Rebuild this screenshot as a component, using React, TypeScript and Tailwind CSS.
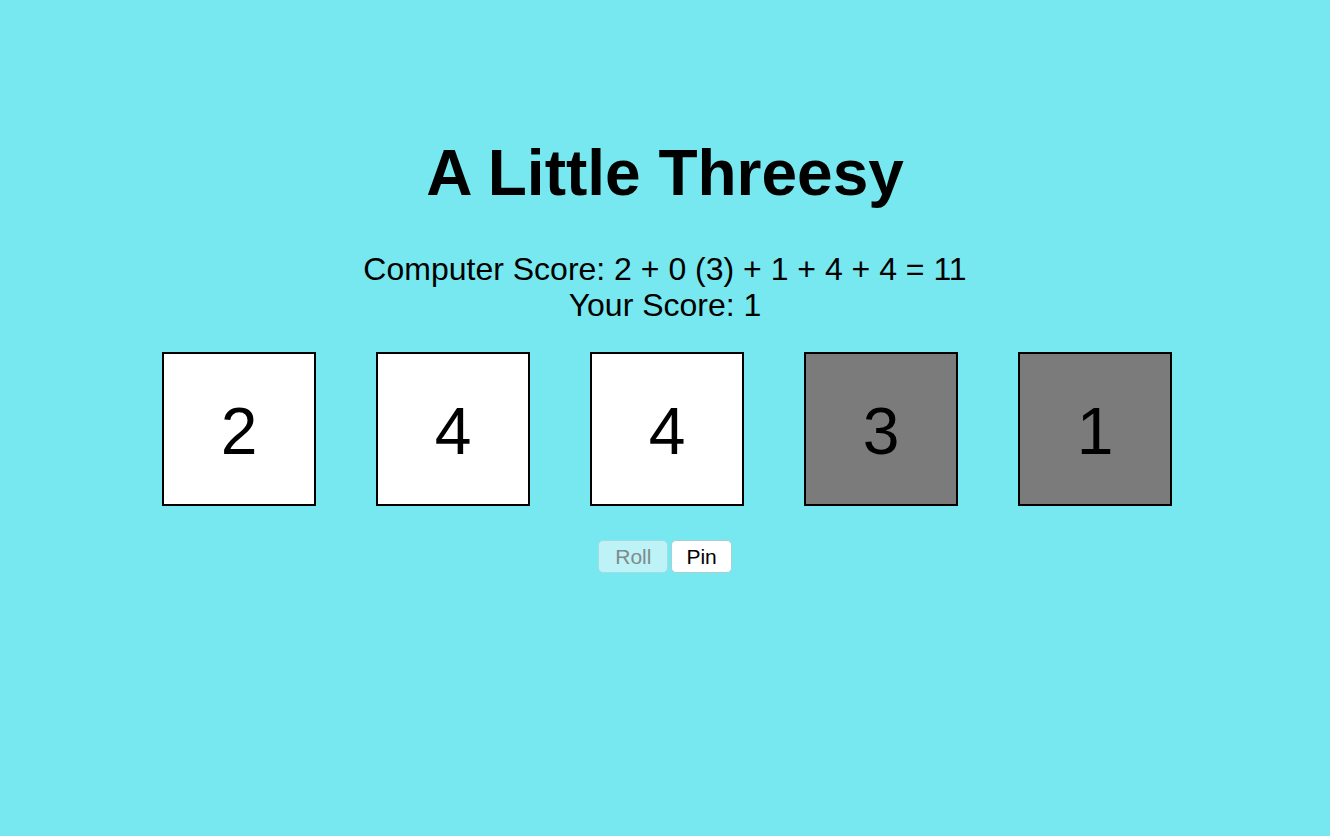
const DICE: { value: number; pinned: boolean }[] = [
  { value: 2, pinned: false },
  { value: 4, pinned: false },
  { value: 4, pinned: false },
  { value: 3, pinned: true },
  { value: 1, pinned: true },
];

export default function App() {
  return (
    <div className="min-h-screen bg-[#77e8ef] text-black font-['Liberation_Sans',Arial,sans-serif] flex flex-col items-center">
      <h1 className="mt-[136px] text-[64px] leading-[74px] font-bold">A Little Threesy</h1>

      <div className="mt-[41px] text-center text-[32px] leading-[36px]">
        <div>Computer Score: 2 + 0 (3) + 1 + 4 + 4 = 11</div>
        <div>Your Score: 1</div>
      </div>

      <div className="mt-[29px] flex gap-[60px] pl-1">
        {DICE.map((d, i) => (
          <div
            key={i}
            className={`w-[154px] h-[154px] border-2 border-black flex items-center justify-center text-[66px] pt-[4px] ${
              d.pinned ? 'bg-[#7b7b7b]' : 'bg-white'
            }`}
          >
            {d.value}
          </div>
        ))}
      </div>

      <div className="mt-[34px] flex gap-[3px]">
        <button
          disabled
          className="h-[33px] px-[16px] rounded-[5px] border border-[#9fdde2] bg-[#bdf3f6] text-[21px] text-[#7f8a8b]"
        >
          Roll
        </button>
        <button className="h-[33px] px-[14px] rounded-[5px] border border-[#a9cfd2] bg-white text-[21px] text-black">
          Pin
        </button>
      </div>
    </div>
  );
}
